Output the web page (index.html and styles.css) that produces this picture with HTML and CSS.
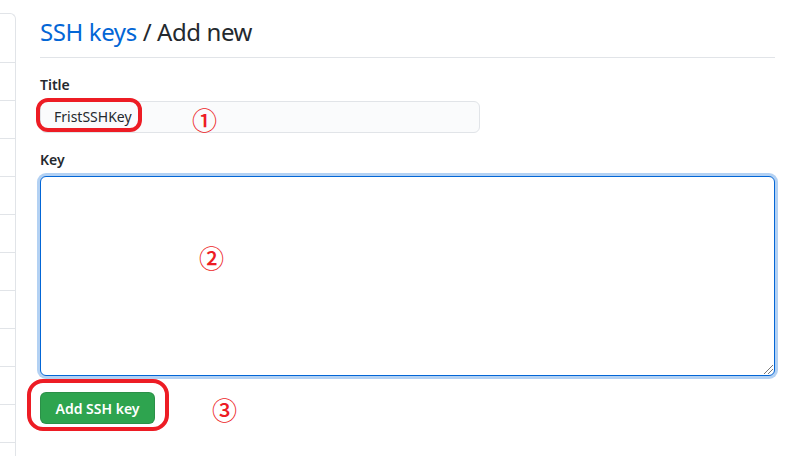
FILE: index.html
```html
<!DOCTYPE html>
<html>
<head>
<meta charset="utf-8">
<link rel="stylesheet" href="styles.css">
</head>
<body>
<div class="page">
  <aside class="sidebar">
    <div class="side-head"></div>
    <div class="side-item"></div>
    <div class="side-item"></div>
    <div class="side-item"></div>
    <div class="side-item"></div>
    <div class="side-item"></div>
    <div class="side-item"></div>
    <div class="side-item"></div>
    <div class="side-item"></div>
    <div class="side-item"></div>
    <div class="side-item"></div>
    <div class="side-item side-last"></div>
  </aside>
  <main class="main">
    <h2 class="title"><a class="crumb">SSH keys</a> / Add new</h2>
    <form class="form">
      <label class="label">Title</label>
      <div class="input">FristSSHKey</div>
      <label class="label label-key">Key</label>
      <div class="textarea"><span class="grip"></span></div>
      <button type="button" class="btn">Add SSH key</button>
    </form>
    <div class="mark mark-1"></div>
    <div class="mark mark-3"></div>
    <span class="num num-1">①</span>
    <span class="num num-2">②</span>
    <span class="num num-3">③</span>
  </main>
</div>
</body>
</html>
```
FILE: styles.css
```css
* { box-sizing: border-box; }
html, body { margin: 0; padding: 0; background: #fff; }
body {
  font-family: "Noto Sans", "Open Sans", sans-serif;
  color: #24292e;
  width: 799px;
  height: 456px;
  overflow: hidden;
}
.page {
  display: flex;
  align-items: flex-start;
}
.sidebar {
  width: 16px;
  margin-top: 13px;
  border-top: 1px solid #e1e4e8;
  border-right: 1px solid #e1e4e8;
  border-top-right-radius: 6px;
  flex: none;
}
.side-head { height: 48px; }
.side-item {
  height: 38px;
  border-top: 1px solid #e1e4e8;
}
.side-item.side-last { height: 14px; }
.main {
  position: relative;
  flex: 1;
  margin-left: 24px;
  margin-right: 24px;
  padding-top: 14px;
}
.title {
  margin: 0;
  font-size: 24px;
  font-weight: 400;
  letter-spacing: -0.4px;
  line-height: 36px;
  padding-bottom: 7px;
  border-bottom: 1px solid #e1e4e8;
}
.crumb { color: #0366d6; text-decoration: none; }
.form { display: flex; flex-direction: column; align-items: flex-start; padding-top: 17px; }
.label {
  font-size: 14px;
  font-weight: 600;
  line-height: 20px;
  margin-bottom: 6px;
}
.label-key { margin-top: 17px; }
.input {
  width: 440px;
  height: 32px;
  background: #fafbfc;
  border: 1px solid #e1e4e8;
  border-radius: 6px;
  font-size: 14px;
  line-height: 30px;
  padding-left: 13px;
}
.textarea {
  position: relative;
  width: 735px;
  height: 200px;
  border: 1px solid #0366d6;
  border-radius: 6px;
  box-shadow: 0 0 0 3px rgba(3,102,214,0.3);
  background: #fff;
}
.grip {
  position: absolute;
  right: 1px;
  bottom: 1px;
  width: 9px;
  height: 9px;
  background: linear-gradient(135deg, transparent 45%, #777 45%, #777 52%, transparent 52%, transparent 70%, #777 70%, #777 77%, transparent 77%);
}
.btn {
  margin-top: 16px;
  width: 115px;
  height: 32px;
  background: #2ea44f;
  color: #fff;
  border: 1px solid rgba(27,31,35,0.15);
  border-radius: 6px;
  font-family: inherit;
  font-size: 14px;
  font-weight: 600;
  padding: 0;
}
.mark {
  position: absolute;
  border: 4px solid #ed1c24;
  border-radius: 12px;
}
.mark-1 { left: -4px; top: 98px; width: 106px; height: 34px; }
.mark-3 { left: -13px; top: 379px; width: 142px; height: 52px; border-radius: 16px; }
.num {
  position: absolute;
  color: #ed1c24;
  font-family: "Noto Sans CJK SC", sans-serif;
  font-weight: 500;
  font-size: 25px;
  line-height: 25px;
}
.num-1 { left: 152px; top: 107px; }
.num-2 { left: 159px; top: 245px; }
.num-3 { left: 172px; top: 397px; }
```
